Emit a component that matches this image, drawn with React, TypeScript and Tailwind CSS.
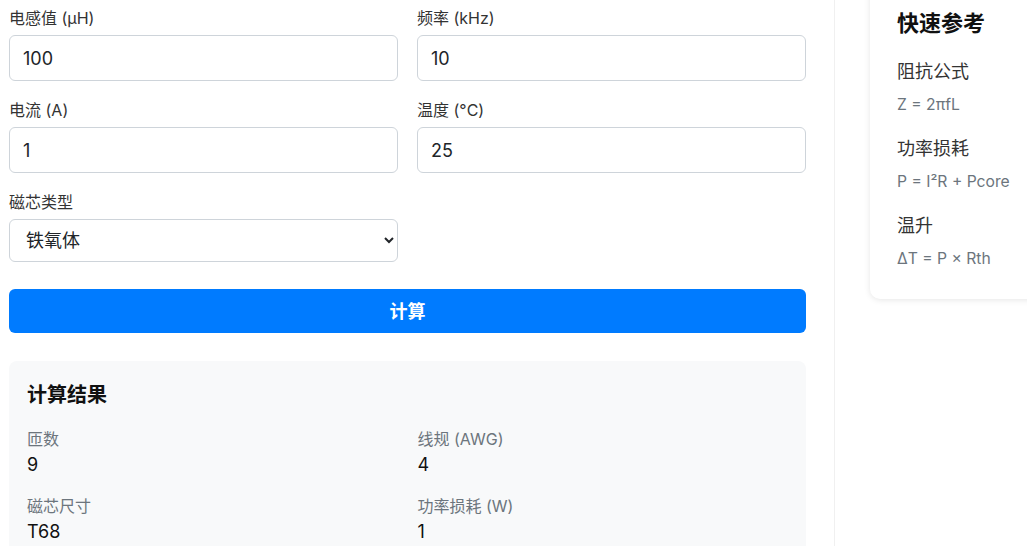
import React from "react";

const font = { fontFamily: 'Inter, "Noto Sans CJK SC", sans-serif' };

function Field({ label, value }: { label: string; value: string }) {
  return (
    <div className="flex flex-col">
      <label className="block text-[16px] leading-[20px] text-[#333] mb-[7px]">{label}</label>
      <input
        defaultValue={value}
        className="h-[46px] w-full rounded-[6px] border border-[#ced4da] bg-white px-[13px] pt-[1px] text-[18px] text-[#212529] outline-none"
      />
    </div>
  );
}

function Result({ label, value }: { label: string; value: string }) {
  return (
    <div>
      <div className="text-[16px] leading-[21px] text-[#6c757d]">{label}</div>
      <div className="text-[18px] leading-[29px] text-[#111]">{value}</div>
    </div>
  );
}

function Ref({ title, formula, last }: { title: string; formula: string; last?: boolean }) {
  return (
    <div className={last ? "" : "mb-[21px]"}>
      <div className="text-[18px] leading-[25px] text-[#333] mb-[10px]">{title}</div>
      <div className="text-[15.7px] leading-[21px] text-[#6c757d] whitespace-nowrap">{formula}</div>
    </div>
  );
}

export default function App() {
  return (
    <div className="flex h-[546px] w-[1027px] overflow-hidden bg-white" style={font}>
      <div className="w-[835px] shrink-0 border-r border-[#f0f0f0] pl-[9px] pr-[28px] pt-[8px]">
        <div className="grid grid-cols-2 gap-x-[19px] gap-y-[19px]">
          <Field label="电感值 (μH)" value="100" />
          <Field label="频率 (kHz)" value="10" />
          <Field label="电流 (A)" value="1" />
          <Field label="温度 (°C)" value="25" />
          <div className="flex flex-col">
            <label className="block text-[16px] leading-[20px] text-[#333] mb-[7px]">磁芯类型</label>
            <select className="h-[43px] w-full rounded-[6px] border border-[#ced4da] bg-white px-[12px] text-[18px] text-[#212529] outline-none">
              <option>铁氧体</option>
              <option>铁粉芯</option>
            </select>
          </div>
        </div>
        <button className="mt-[27px] h-[44px] w-full rounded-[6px] bg-[#007bff] text-[18px] font-bold text-white">
          计算
        </button>
        <div className="mt-[28px] rounded-[8px] bg-[#f8f9fa] px-[18px] pt-[19px] pb-[20px]">
          <div className="text-[20px] leading-[30px] font-bold text-[#111] mb-[19px]">计算结果</div>
          <div className="grid grid-cols-2 gap-x-[20px] gap-y-[17px]">
            <Result label="匝数" value="9" />
            <Result label="线规 (AWG)" value="4" />
            <Result label="磁芯尺寸" value="T68" />
            <Result label="功率损耗 (W)" value="1" />
          </div>
        </div>
      </div>
      <div className="flex-1 pl-[35px]">
        <div className="-mt-[20px] w-[320px] rounded-[10px] bg-white px-[27px] pt-[27px] pb-[30px] shadow-[0_1px_6px_rgba(0,0,0,0.1)]">
          <div className="text-[22px] leading-[33px] font-bold text-[#111] mb-[19px]">快速参考</div>
          <Ref title="阻抗公式" formula="Z = 2πfL" />
          <Ref title="功率损耗" formula="P = I²R + Pcore" />
          <Ref title="温升" formula="ΔT = P × Rth" last />
        </div>
      </div>
    </div>
  );
}
